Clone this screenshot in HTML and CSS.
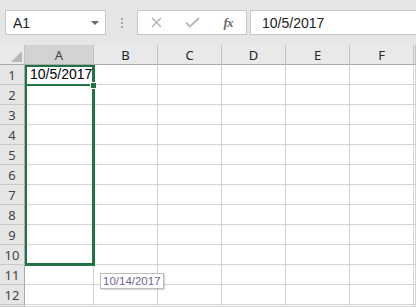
FILE: index.html
```html
<!DOCTYPE html>
<html lang="en">

<head>
    <meta charset="UTF-8">
    <title>Book1 - Excel</title>
    <link rel="stylesheet" href="styles.css">
</head>

<body>

    <div class="toolbar">
        <div class="name-box">
            <span>A1</span>
            <span class="arrow"></span>
        </div>
        <div class="grip">
            <i></i><i></i><i></i>
        </div>
        <div class="buttons">
            <span class="btn">
                <svg width="11" height="11" viewBox="0 0 11 11"><path d="M1 1L10 10M10 1L1 10" stroke="#b9b9b9" stroke-width="1.6" fill="none"/></svg>
            </span>
            <span class="btn">
                <svg width="15" height="11" viewBox="0 0 15 11"><path d="M1 5.5L5 9.5L14 1" stroke="#b9b9b9" stroke-width="1.8" fill="none"/></svg>
            </span>
            <span class="btn fx">fx</span>
        </div>
        <div class="formula">10/5/2017</div>
    </div>

    <div class="sheet">
        <table class="grid">
            <thead>
                <tr>
                    <th class="corner"><span class="tri"></span></th>
                    <th class="col-a selected">A</th>
                    <th class="col">B</th>
                    <th class="col">C</th>
                    <th class="col">D</th>
                    <th class="col">E</th>
                    <th class="col">F</th>
                    <th class="col-g"></th>
                </tr>
            </thead>
            <tbody>
                <tr><th>1</th><td class="value">10/5/2017</td><td></td><td></td><td></td><td></td><td></td><td></td></tr>
                <tr><th>2</th><td></td><td></td><td></td><td></td><td></td><td></td><td></td></tr>
                <tr><th>3</th><td></td><td></td><td></td><td></td><td></td><td></td><td></td></tr>
                <tr><th>4</th><td></td><td></td><td></td><td></td><td></td><td></td><td></td></tr>
                <tr><th>5</th><td></td><td></td><td></td><td></td><td></td><td></td><td></td></tr>
                <tr><th>6</th><td></td><td></td><td></td><td></td><td></td><td></td><td></td></tr>
                <tr><th>7</th><td></td><td></td><td></td><td></td><td></td><td></td><td></td></tr>
                <tr><th>8</th><td></td><td></td><td></td><td></td><td></td><td></td><td></td></tr>
                <tr><th>9</th><td></td><td></td><td></td><td></td><td></td><td></td><td></td></tr>
                <tr><th>10</th><td></td><td></td><td></td><td></td><td></td><td></td><td></td></tr>
                <tr><th>11</th><td></td><td></td><td></td><td></td><td></td><td></td><td></td></tr>
                <tr><th>12</th><td></td><td></td><td></td><td></td><td></td><td></td><td></td></tr>
                <tr class="last"><th></th><td></td><td></td><td></td><td></td><td></td><td></td><td></td></tr>
            </tbody>
        </table>

        <!-- drag-fill outline, active cell and tooltip sit over the grid -->
        <div class="range"></div>
        <div class="active"></div>
        <div class="handle"></div>
        <div class="tip">10/14/2017</div>
    </div>

</body>

</html>
```

FILE: styles.css
```css
body {
    margin: 0;
    background: #e6e6e6;
    overflow: hidden;
    width: 416px;
    height: 307px;
}

.toolbar {
    display: flex;
    align-items: stretch;
    height: 25px;
    padding: 10px 0 10px 5px;
}

.name-box {
    width: 101px;
    box-sizing: border-box;
    border: 1px solid #c6c6c6;
    background: #fff;
    display: flex;
    align-items: center;
    justify-content: space-between;
    padding: 0 6px 0 7px;
    font-family: 'Liberation Sans', Arial, sans-serif;
    font-size: 14px;
    color: #222;
}

.name-box .arrow {
    width: 0;
    height: 0;
    border-left: 4px solid transparent;
    border-right: 4px solid transparent;
    border-top: 4px solid #6a6a6a;
}

.grip {
    width: 31px;
    display: flex;
    flex-direction: column;
    align-items: center;
    justify-content: center;
    gap: 2px;
}

.grip i {
    display: block;
    width: 2px;
    height: 2px;
    background: #a3a3a3;
}

.buttons {
    width: 110px;
    box-sizing: border-box;
    border: 1px solid #c6c6c6;
    background: #fff;
    display: flex;
    align-items: center;
}

.btn {
    width: 37px;
    display: flex;
    justify-content: center;
    align-items: center;
}

.btn.fx {
    font-family: 'Liberation Serif', 'Times New Roman', serif;
    font-style: italic;
    font-weight: bold;
    font-size: 13px;
    color: #6b6b6b;
    letter-spacing: -1px;
}

.formula {
    flex: 1;
    margin-left: 3px;
    border: 1px solid #c6c6c6;
    border-right: none;
    background: #fff;
    display: flex;
    align-items: center;
    padding-left: 11px;
    font-family: 'Liberation Sans', Arial, sans-serif;
    font-size: 14px;
    color: #222;
}

.sheet {
    position: relative;
    background: #fff;
}

.grid {
    border-collapse: separate;
    border-spacing: 0;
    table-layout: fixed;
    width: 416px;
}

.grid th,
.grid td {
    box-sizing: border-box;
    height: 20px;
    padding: 0;
    border-right: 1px solid #d4d4d4;
    border-bottom: 1px solid #d4d4d4;
}

.grid thead th {
    background: #e9e9e9;
    font-family: 'Noto Sans', sans-serif;
    font-weight: normal;
    font-size: 13px;
    color: #262626;
    border-bottom: 1px solid #ababab;
    border-right: 1px solid #c2c2c2;
}

.grid thead th.selected {
    background: #d3d3d3;
    color: #444;
}

.corner {
    width: 25px;
    position: relative;
}

.tri {
    position: absolute;
    right: 2px;
    bottom: 2px;
    width: 0;
    height: 0;
    border-left: 11px solid transparent;
    border-bottom: 11px solid #b7b7b7;
}

.col-a {
    width: 69px;
}

.col {
    width: 64px;
}

.col-g {
    width: 2px;
}

.grid tbody th {
    background: #e6e6e6;
    border-right: 1px solid #ababab;
    border-bottom: 1px solid #c9c9c9;
    font-family: 'Noto Sans', sans-serif;
    font-weight: normal;
    font-size: 13px;
    color: #444;
    text-align: center;
}

.grid tr.last th,
.grid tr.last td {
    height: 2px;
}

.value {
    font-family: 'Liberation Sans', Arial, sans-serif;
    font-size: 14px;
    color: #000;
    padding-left: 5px !important;
    line-height: 19px;
    white-space: nowrap;
}

.range {
    position: absolute;
    left: 25px;
    top: 20px;
    width: 70px;
    height: 201px;
    box-sizing: border-box;
    border: 2px solid #217346;
    border-right-width: 3px;
    border-bottom-width: 3px;
}

.active {
    position: absolute;
    left: 25px;
    top: 20px;
    width: 70px;
    height: 21px;
    box-sizing: border-box;
    border-bottom: 2px solid #217346;
}

.handle {
    position: absolute;
    left: 90px;
    top: 37px;
    width: 5px;
    height: 5px;
    background: #217346;
    border: 1px solid #fff;
}

.tip {
    position: absolute;
    left: 100px;
    top: 228px;
    height: 16px;
    box-sizing: border-box;
    padding: 0 2px;
    background: #fff;
    border: 1px solid #bdbdbd;
    box-shadow: 1px 1px 1px rgba(0, 0, 0, 0.15);
    font-family: 'Liberation Sans', Arial, sans-serif;
    font-size: 11.5px;
    line-height: 14px;
    color: #755f92;
}
```
